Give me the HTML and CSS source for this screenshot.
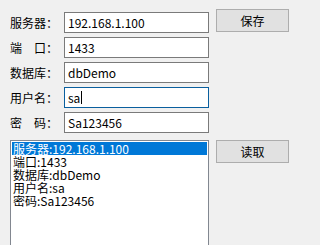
FILE: index.html
```html
<!DOCTYPE html>
<html>
<head>
<meta charset="utf-8">
<link rel="stylesheet" href="styles.css">
</head>
<body>
<div class="window">
  <div class="left">
    <div class="form">
      <div class="row"><span class="label">服务器：</span><div class="box">192.168.1.100</div></div>
      <div class="row"><span class="label">端　口：</span><div class="box">1433</div></div>
      <div class="row"><span class="label">数据库：</span><div class="box">dbDemo</div></div>
      <div class="row"><span class="label">用户名：</span><div class="box focus">sa<span class="caret"></span></div></div>
      <div class="row"><span class="label">密　码：</span><div class="box">Sa123456</div></div>
    </div>
    <div class="list">
      <div class="item sel">服务器:192.168.1.100</div>
      <div class="item">端口:1433</div>
      <div class="item">数据库:dbDemo</div>
      <div class="item">用户名:sa</div>
      <div class="item">密码:Sa123456</div>
    </div>
  </div>
  <div class="right">
    <div class="btn">保存</div>
    <div class="btn read">读取</div>
  </div>
</div>
</body>
</html>
```
FILE: styles.css
```css
html, body {
  margin: 0;
  padding: 0;
  background: #f0f0f0;
  width: 293px;
  height: 245px;
  overflow: hidden;
  font-family: "Noto Sans CJK SC", "Noto Sans", sans-serif;
  font-size: 12px;
  color: #000;
}
.window {
  display: flex;
  padding: 9px 0 0 10px;
}
.left {
  width: 199px;
  display: flex;
  flex-direction: column;
}
.form {
  margin-top: 3px;
  display: flex;
  flex-direction: column;
  gap: 4px;
}
.row {
  display: flex;
  align-items: center;
  height: 21px;
}
.label {
  width: 54px;
  white-space: nowrap;
  font-size: 12px;
  line-height: 21px;
}
.box {
  box-sizing: border-box;
  width: 145px;
  height: 21px;
  border: 1px solid #7a7a7a;
  background: #fff;
  padding: 0 3px;
  line-height: 19px;
  display: flex;
  align-items: center;
}
.box.focus {
  border-color: #0a5f9e;
}
.caret {
  display: inline-block;
  width: 1px;
  height: 13px;
  background: #000;
  margin-left: 1px;
}
.list {
  box-sizing: border-box;
  margin-top: 7px;
  width: 199px;
  height: 105px;
  border: 1px solid #828790;
  border-bottom: none;
  background: #fff;
  padding: 1px 1px;
}
.item {
  line-height: 13px;
  height: 13px;
  padding-left: 1px;
  white-space: nowrap;
}
.item.sel {
  background: #0078d7;
  color: #fff;
}
.right {
  margin-left: 7px;
  display: flex;
  flex-direction: column;
}
.btn {
  box-sizing: border-box;
  width: 73px;
  height: 23px;
  border: 1px solid #adadad;
  background: #e1e1e1;
  display: flex;
  align-items: center;
  justify-content: center;
  font-size: 12px;
}
.btn.read {
  margin-top: 108px;
}
```
